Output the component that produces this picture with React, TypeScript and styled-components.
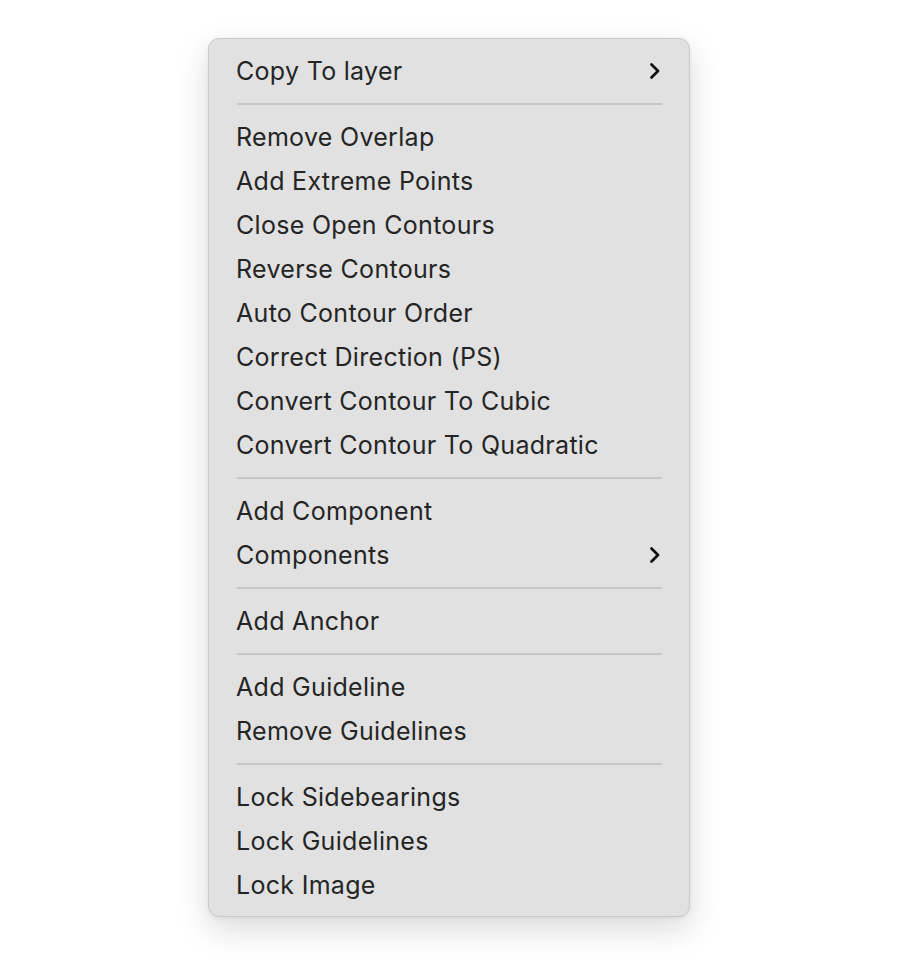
import * as React from 'react';
import styled, { createGlobalStyle } from 'styled-components';

const GlobalStyle = createGlobalStyle`
  html, body {
    margin: 0;
    padding: 0;
    background: #ffffff;
  }
  body {
    font-family: Inter, "Noto Sans", "Liberation Sans", sans-serif;
  }
`;

type Entry = { label: string; submenu?: boolean } | 'sep';

const entries: Array<Entry> = [
  { label: 'Copy To layer', submenu: true },
  'sep',
  { label: 'Remove Overlap' },
  { label: 'Add Extreme Points' },
  { label: 'Close Open Contours' },
  { label: 'Reverse Contours' },
  { label: 'Auto Contour Order' },
  { label: 'Correct Direction (PS)' },
  { label: 'Convert Contour To Cubic' },
  { label: 'Convert Contour To Quadratic' },
  'sep',
  { label: 'Add Component' },
  { label: 'Components', submenu: true },
  'sep',
  { label: 'Add Anchor' },
  'sep',
  { label: 'Add Guideline' },
  { label: 'Remove Guidelines' },
  'sep',
  { label: 'Lock Sidebearings' },
  { label: 'Lock Guidelines' },
  { label: 'Lock Image' },
];

const Page = styled.div`
  display: flex;
  align-items: flex-start;
  padding: 38px 0 0 208px;
  min-height: 970px;
  box-sizing: border-box;
`;

const Menu = styled.div`
  width: 482px;
  box-sizing: border-box;
  padding: 10px 0 9px;
  background: #e0e1e0;
  border: 1px solid #c9c9c9;
  border-radius: 11px;
  box-shadow: 0 12px 32px rgba(0, 0, 0, 0.15), 0 1px 4px rgba(0, 0, 0, 0.06);
  display: flex;
  flex-direction: column;
`;

const Item = styled.div`
  height: 44px;
  display: flex;
  align-items: center;
  justify-content: space-between;
  padding: 0 28px 0 27px;
  font-size: 25px;
  color: #252525;
  letter-spacing: 0.3px;
`;

const Separator = styled.div`
  height: 22px;
  display: flex;
  align-items: center;
  padding: 0 27px 0 28px;

  &::after {
    content: '';
    flex: 1;
    height: 2px;
    background: #c6c7c6;
  }
`;

const Chevron = styled((props: { className?: string }) => (
  <svg className={props.className} width="12" height="18" viewBox="0 0 12 18">
    <path d="M2.5 2.5 L9 9 L2.5 15.5" fill="none" stroke="#111" strokeWidth="2.8" strokeLinecap="round" strokeLinejoin="round" />
  </svg>
))`
  margin-right: 0;
`;

const App = () => (
  <Page>
    <GlobalStyle />
    <Menu>
      {entries.map((e, i) =>
        e === 'sep' ? (
          <Separator key={i} />
        ) : (
          <Item key={i}>
            <span>{e.label}</span>
            {e.submenu && <Chevron />}
          </Item>
        )
      )}
    </Menu>
  </Page>
);

export default App;
